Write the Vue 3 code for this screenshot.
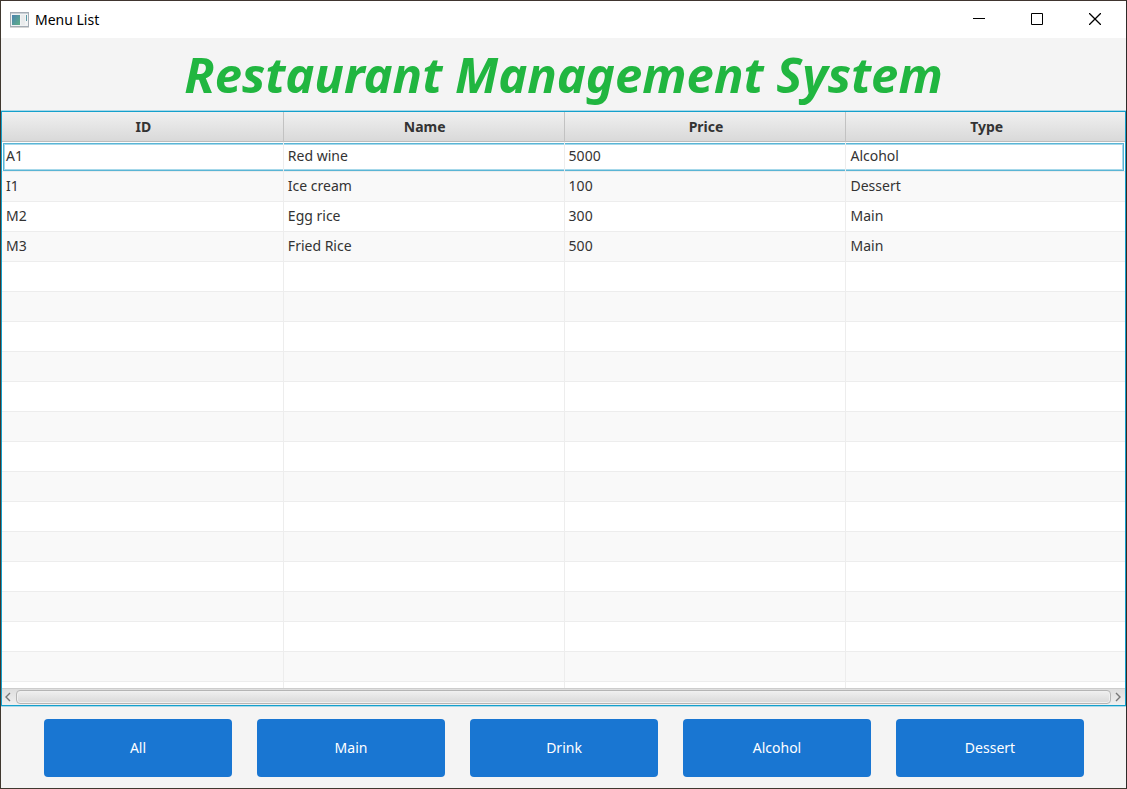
<script setup>
import { computed, ref } from 'vue'

const columns = ['ID', 'Name', 'Price', 'Type']
const filters = ['All', 'Main', 'Drink', 'Alcohol', 'Dessert']
const items = [
  { id: 'A1', name: 'Red wine', price: 5000, type: 'Alcohol' },
  { id: 'I1', name: 'Ice cream', price: 100, type: 'Dessert' },
  { id: 'M2', name: 'Egg rice', price: 300, type: 'Main' },
  { id: 'M3', name: 'Fried Rice', price: 500, type: 'Main' },
]
const filter = ref('All')
const visible = computed(() =>
  filter.value === 'All' ? items : items.filter((item) => item.type === filter.value),
)
const fillerRows = computed(() => 60 - visible.value.length)
</script>

<template>
  <div class="window">
    <header class="titlebar">
      <svg class="app-icon" width="19" height="16" viewBox="0 0 19 16" aria-hidden="true">
        <defs>
          <linearGradient id="pane" x1="0" y1="0" x2="1" y2="1">
            <stop offset="0" stop-color="#4a82b0" />
            <stop offset="1" stop-color="#5fb086" />
          </linearGradient>
        </defs>
        <rect x="0.5" y="0.5" width="18" height="14" fill="#f1f3f4" stroke="#a4acb4" />
        <rect x="1" y="1" width="17" height="1" fill="#c9d0d6" />
        <rect x="2" y="3" width="8" height="10" fill="url(#pane)" />
        <rect x="11" y="3" width="4" height="10" fill="#e9ebec" />
        <rect x="16" y="3" width="1" height="6" fill="#5a9aa6" />
        <rect x="0" y="15" width="19" height="1" fill="#d5d5d5" />
      </svg>
      <span class="caption">Menu List</span>
      <div class="controls">
        <button type="button" aria-label="Minimize">
          <svg width="12" height="12" viewBox="0 0 12 12"><path d="M0 5.5H12" /></svg>
        </button>
        <button type="button" aria-label="Maximize">
          <svg width="12" height="12" viewBox="0 0 12 12"><path d="M.5 .5H11.5V11.5H.5Z" /></svg>
        </button>
        <button type="button" aria-label="Close">
          <svg width="12" height="12" viewBox="0 0 12 12"><path class="cross" d="M0 0L12 12M12 0L0 12" /></svg>
        </button>
      </div>
    </header>

    <h1>Restaurant Management System</h1>

    <main class="table-view">
      <div class="rows">
        <table>
          <colgroup>
            <col class="wide" /><col class="narrow" /><col class="wide" /><col />
          </colgroup>
          <thead>
            <tr>
              <th v-for="column in columns" :key="column" scope="col">{{ column }}</th>
            </tr>
          </thead>
          <tbody>
            <tr v-for="(item, i) in visible" :key="item.id" :class="{ focused: i === 0 }">
              <td>{{ item.id }}</td>
              <td>{{ item.name }}</td>
              <td>{{ item.price }}</td>
              <td>{{ item.type }}</td>
            </tr>
            <tr v-for="n in fillerRows" :key="'filler' + n">
              <td v-for="column in columns" :key="column"></td>
            </tr>
          </tbody>
        </table>
      </div>
      <div class="scrollbar">
        <button type="button" class="back" aria-label="Scroll left">
          <svg width="6" height="10" viewBox="0 0 6 10"><path d="M5 1L1 5L5 9" /></svg>
        </button>
        <div class="thumb"></div>
        <button type="button" aria-label="Scroll right">
          <svg width="6" height="10" viewBox="0 0 6 10"><path d="M1 1L5 5L1 9" /></svg>
        </button>
      </div>
    </main>

    <nav class="filters">
      <button v-for="name in filters" :key="name" type="button" @click="filter = name">
        {{ name }}
      </button>
    </nav>
  </div>
</template>

<style>
body {
  margin: 0;
}
</style>

<style scoped>
.window {
  box-sizing: border-box;
  height: 100vh;
  display: flex;
  flex-direction: column;
  border: 1px solid #2e2a28;
  border-top-color: #40352f;
  border-left-color: #40382f;
  border-bottom-color: #40382f;
  background: #f4f4f4;
  color: #333;
  font-family: "Noto Sans", "Open Sans", sans-serif;
  font-size: 14px;
  line-height: 20px;
}
button {
  border: 0;
  padding: 0;
  background: none;
  font: inherit;
}
.titlebar {
  display: flex;
  align-items: center;
  flex: none;
  height: 37px;
  padding: 0 2px 0 9px;
  background: #fff;
  color: #000;
}
.caption {
  margin-left: 6px;
}
.controls {
  display: flex;
  align-self: flex-start;
  margin-left: auto;
  height: 36px;
}
.controls button {
  display: flex;
  align-items: center;
  justify-content: center;
  width: 58px;
}
.controls path {
  fill: none;
  stroke: #000;
}
.controls .cross {
  stroke-width: 1.3;
}
h1 {
  flex: none;
  margin: 0;
  height: 72px;
  color: #21b640;
  font-size: 49px;
  font-style: italic;
  font-weight: 700;
  line-height: 72px;
  text-align: center;
  white-space: nowrap;
}
.table-view {
  flex: 1;
  min-height: 0;
  display: flex;
  flex-direction: column;
  border: 1px solid #14a0cc;
  background: #fff;
  margin-top: 1px;
  box-shadow: 0 -1px #a9d9e9, 0 1px #a9d9e9;
}
.rows {
  flex: 1;
  min-height: 0;
  overflow: hidden;
}
table {
  width: 100%;
  table-layout: fixed;
  border-collapse: separate;
  border-spacing: 0;
}
.wide {
  width: 25.1%;
}
.narrow {
  width: 25%;
}
th {
  box-sizing: border-box;
  height: 30px;
  padding: 0 0 0 2px;
  border-right: 1px solid #c2c2c2;
  border-bottom: 1px solid #bcbcbc;
  background: linear-gradient(#f0f0f0, #d9d9d9);
  font-weight: 700;
}
th:last-child {
  border-right: 0;
}
td {
  box-sizing: border-box;
  height: 30px;
  padding: 0 4px 2px;
  border-right: 1px solid #ededed;
  border-bottom: 1px solid #ededed;
}
td:last-child {
  border-right: 0;
}
tbody tr:nth-child(even) {
  background: #f9f9f9;
}
.focused td {
  position: relative;
}
/* The focus ring runs across the row, broken only by the column lines. */
.focused td::after {
  content: "";
  position: absolute;
  inset: 1px 0 0;
  border: solid #5ab5d5;
  border-width: 1px 0;
  box-shadow: inset 0 1px #a6d8ea, inset 0 -1px #a6d8ea;
  pointer-events: none;
}
.focused td:first-child::after {
  left: 1px;
  border-left-width: 1px;
  box-shadow: inset 1px 1px #a6d8ea, inset 0 -1px #a6d8ea;
}
.focused td:last-child::after {
  right: 1px;
  border-right-width: 1px;
  box-shadow: inset -1px -1px #a6d8ea, inset 0 1px #a6d8ea;
}
.scrollbar {
  flex: none;
  display: flex;
  box-sizing: border-box;
  height: 17px;
  padding: 1px 0 1px;
  border-top: 1px solid #cdcdcd;
  background: linear-gradient(#dedede, #f0f0f0);
}
.scrollbar button {
  display: flex;
  align-items: center;
  justify-content: center;
  width: 14px;
}
.scrollbar .back {
  justify-content: flex-start;
  padding-left: 3px;
}
.scrollbar path {
  fill: none;
  stroke: #777;
  stroke-width: 1.4;
}
.thumb {
  flex: 1;
  box-sizing: border-box;
  border: 1px solid #b5b5b5;
  border-radius: 4px;
  background: linear-gradient(#f0f0f0, #d9d9d9);
  box-shadow: inset 0 0 0 1px #f0f0f0;
}
.filters {
  flex: none;
  display: flex;
  justify-content: center;
  gap: 25px;
  padding: 13px 42px 11px 43px;
}
.filters button {
  flex: 1;
  height: 58px;
  border-radius: 4px;
  background: #1976d2;
  color: #fff;
}
</style>
